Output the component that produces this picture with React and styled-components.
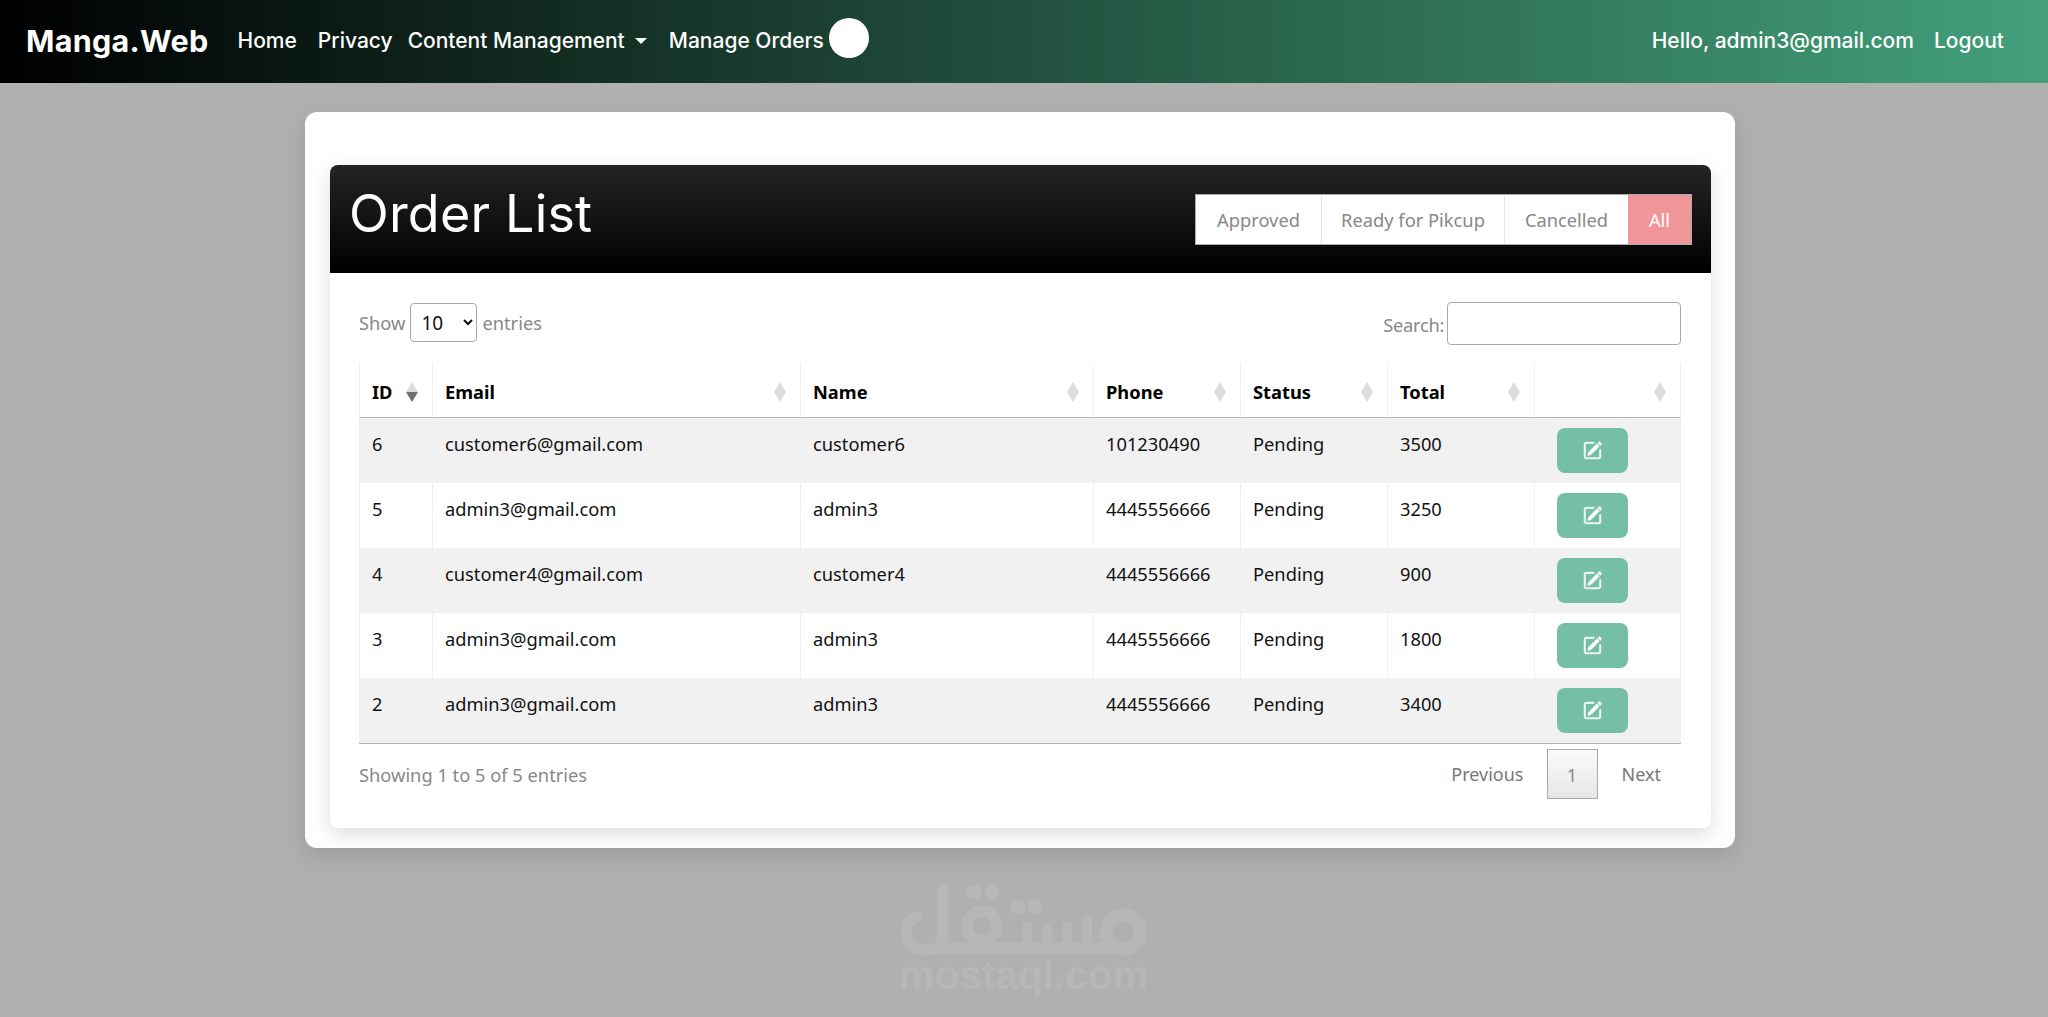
import React from "react";
import styled, {createGlobalStyle} from "styled-components";
import {BsPencilSquare} from "react-icons/bs";

const NAV_FONT = `"Inter", "Liberation Sans", sans-serif`;
const BODY_FONT = `"Noto Sans", "Open Sans", sans-serif`;

const orders = [
	{id: 6, email: "customer6@gmail.com", name: "customer6", phone: "101230490", total: 3500},
	{id: 5, email: "admin3@gmail.com", name: "admin3", phone: "4445556666", total: 3250},
	{id: 4, email: "customer4@gmail.com", name: "customer4", phone: "4445556666", total: 900},
	{id: 3, email: "admin3@gmail.com", name: "admin3", phone: "4445556666", total: 1800},
	{id: 2, email: "admin3@gmail.com", name: "admin3", phone: "4445556666", total: 3400}
];

const columns = [
	{label: "ID", width: 73, active: true},
	{label: "Email", width: 368},
	{label: "Name", width: 293},
	{label: "Phone", width: 147},
	{label: "Status", width: 147},
	{label: "Total", width: 147},
	{label: "", width: 147}
];

const GlobalStyle = createGlobalStyle`
	html, body {
		margin: 0;
		height: 100%;
	}
	body {
		background: #b0b0b0;
		font-family: ${BODY_FONT};
		overflow: hidden;
	}
`;

// Navbar
const Navbar = styled.nav`
	align-items: center;
	background: linear-gradient(90deg, #000 0%, #43a07b 100%);
	box-sizing: border-box;
	display: flex;
	height: 83px;
	padding: 0 26px 3px;
`;

const Brand = styled.span`
	color: #fff;
	font-family: ${NAV_FONT};
	font-size: 30.5px;
	font-weight: 700;
	letter-spacing: 0.3px;
	margin-right: 29px;
`;

const NavLink = styled.span`
	color: #fff;
	font-family: ${NAV_FONT};
	font-size: 21px;
	font-weight: 500;
	margin-right: ${(props) => props.gap ?? 19}px;
	white-space: nowrap;
`;

const Caret = styled.i`
	border-left: 6px solid transparent;
	border-right: 6px solid transparent;
	border-top: 6px solid #fff;
	display: inline-block;
	margin-left: 10px;
	vertical-align: 4px;
`;

const CartBadge = styled.span`
	background: #fff;
	border-radius: 50%;
	height: 40px;
	margin: -5px 0 0 -14px;
	width: 40px;
`;

const NavRight = styled.div`
	align-items: center;
	display: flex;
	margin-left: auto;
	padding-right: 18px;
`;

// Cards
const Sheet = styled.main`
	background: #fff;
	border-radius: 12px;
	box-shadow: 0 8px 24px rgba(0, 0, 0, 0.12);
	box-sizing: border-box;
	height: 736px;
	margin: 29px 0 0 305px;
	padding: 53px 24px 20px 25px;
	width: 1430px;
`;

const Panel = styled.section`
	border-radius: 8px;
	box-shadow: 0 6px 20px rgba(0, 0, 0, 0.14);
	height: 663px;
`;

const PanelHead = styled.header`
	align-items: flex-start;
	background: linear-gradient(180deg, #242424 0%, #000 100%);
	border-radius: 8px 8px 0 0;
	box-sizing: border-box;
	display: flex;
	height: 108px;
	justify-content: space-between;
	padding: 29px 19px 0 19px;
`;

const Title = styled.h1`
	color: #fff;
	font-family: ${NAV_FONT};
	font-size: 52px;
	font-weight: 400;
	letter-spacing: 0.2px;
	line-height: 40px;
	margin: 0;
`;

const FilterGroup = styled.div`
	background: #fff;
	border: 1px solid #aaa;
	display: flex;
	height: 49px;
`;

const FilterItem = styled.span`
	align-items: center;
	background: ${(props) => (props.active ? "#f09599" : "#fff")};
	border-left: ${(props) => (props.first || props.active ? "none" : "1px solid #e6e6e6")};
	box-sizing: border-box;
	color: ${(props) => (props.active ? "#fff" : "#888")};
	display: flex;
	font-size: 18.3px;
	justify-content: center;
	width: ${(props) => props.width}px;
`;

const PanelBody = styled.div`
	padding: 29px 30px 0 29px;
`;

const Controls = styled.div`
	align-items: flex-start;
	color: #888;
	display: flex;
	font-size: 18.3px;
	height: 61px;
	justify-content: space-between;
`;

const Label = styled.label`
	align-items: center;
	display: flex;
	gap: ${(props) => props.gap}px;
	height: ${(props) => props.height}px;
`;

const SearchLabel = styled.span`
	letter-spacing: -0.3px;
	padding-top: 2px;
`;

const Select = styled.select`
	background: #fff;
	border: 1px solid #aaa;
	border-radius: 4px;
	color: #111;
	font-family: ${BODY_FONT};
	font-size: 19px;
	height: 39px;
	padding: 0 4px 0 6px;
	width: 67px;
`;

const SearchInput = styled.input`
	background: #fff;
	border: 1px solid #aaa;
	border-radius: 4px;
	box-sizing: border-box;
	height: 43px;
	width: 234px;
`;

// Table
const Table = styled.table`
	border-collapse: separate;
	border-spacing: 0;
	color: #111;
	font-size: 18.3px;
	table-layout: fixed;
	width: 1322px;
`;

const Th = styled.th`
	border-bottom: 1px solid #b5b5b5;
	border-left: 1px solid #f0f0f0;
	box-sizing: border-box;
	color: #000;
	font-weight: 700;
	height: 55px;
	padding: 2px 12px 0;
	position: relative;
	text-align: left;
	width: ${(props) => props.width}px;
	&:last-child {
		border-right: 1px solid #f0f0f0;
	}
`;

const SortIcon = styled.svg`
	height: 20px;
	position: absolute;
	right: 14px;
	top: 19px;
	width: 12px;
`;

const Row = styled.tr`
	background: ${(props) => (props.striped ? "#f1f1f1" : "#fff")};
`;

const Td = styled.td`
	border-left: 1px solid #f0f0f0;
	box-sizing: border-box;
	height: 65px;
	padding: 13px 12px 0;
	vertical-align: top;
	&:last-child {
		border-right: 1px solid #f0f0f0;
		padding: 10px 0 0 22px;
	}
`;

const EditButton = styled.button`
	align-items: center;
	background: #75bfa7;
	border: none;
	border-radius: 8px;
	color: #fff;
	display: flex;
	font-size: 19px;
	height: 45px;
	justify-content: center;
	width: 71px;
	svg {
		stroke: currentColor;
		stroke-width: 0.5;
	}
`;

const Footer = styled.div`
	align-items: center;
	border-top: 1px solid #b5b5b5;
	color: #888;
	display: flex;
	font-size: 18.3px;
	height: 60px;
	justify-content: space-between;
`;

const Pager = styled.div`
	align-items: center;
	display: flex;
	padding-right: 20px;
`;

const PageLink = styled.span`
	color: #777;
	font-size: 18px;
`;

const PageCurrent = styled.span`
	align-items: center;
	background: linear-gradient(180deg, #fafafa 0%, #e6e6e6 100%);
	border: 1px solid #aaa;
	box-sizing: border-box;
	color: #888;
	display: flex;
	height: 50px;
	justify-content: center;
	margin: 0 24px 0 23px;
	width: 51px;
`;

// Watermark
const Watermark = styled.div`
	align-items: center;
	color: #b7b7b7;
	display: flex;
	flex-direction: column;
	left: 900px;
	position: absolute;
	top: 884px;
	width: 247px;
`;

const WatermarkText = styled.span`
	font-family: "Liberation Sans", sans-serif;
	font-size: 40.5px;
	font-weight: 700;
	line-height: 40px;
	margin-top: -5px;
`;

function SortArrows({active}) {
	return (
		<SortIcon viewBox="0 0 12 20">
			<path d="M6 0 L12 10 H0 Z" fill="#dcdcdc" />
			<path d="M6 20 L12 10 H0 Z" fill={active ? "#707070" : "#dcdcdc"} />
		</SortIcon>
	);
}

function MostaqlLogo() {
	return (
		<svg width="247" height="76" viewBox="0 0 247 76" fill="none" stroke="#b7b7b7" strokeLinecap="round" strokeLinejoin="round" strokeWidth="11">
			<path d="M43 6 V50 Q43 66 28 66 Q6 66 6 46 Q6 36 18 33" />
			<path d="M43 64 H222" />
			<circle cx="82" cy="42" r="15" />
			<path d="M127 62 V42 M147 62 V46 M167 62 V42 M187 62 V35" strokeWidth="10" />
			<circle cx="223" cy="48" r="17" strokeWidth="13" />
			<g fill="#b7b7b7" stroke="none">
				<circle cx="74" cy="8" r="7.5" />
				<circle cx="92" cy="8" r="7.5" />
				<circle cx="118" cy="23" r="7.5" />
				<circle cx="135" cy="23" r="7.5" />
			</g>
		</svg>
	);
}

export default function App() {
	return (
		<>
			<GlobalStyle />
			<Navbar>
				<Brand>Manga.Web</Brand>
				<NavLink gap={21}>Home</NavLink>
				<NavLink gap={15}>Privacy</NavLink>
				<NavLink gap={22}>Content Management<Caret /></NavLink>
				<NavLink>Manage Orders</NavLink>
				<CartBadge />
				<NavRight>
					<NavLink gap={20}>Hello, admin3@gmail.com</NavLink>
					<NavLink gap={0}>Logout</NavLink>
				</NavRight>
			</Navbar>
			<Sheet>
				<Panel>
					<PanelHead>
						<Title>Order List</Title>
						<FilterGroup>
							<FilterItem first width={125}>Approved</FilterItem>
							<FilterItem width={183}>Ready for Pikcup</FilterItem>
							<FilterItem width={124}>Cancelled</FilterItem>
							<FilterItem active width={63}>All</FilterItem>
						</FilterGroup>
					</PanelHead>
					<PanelBody>
						<Controls>
							<Label height={41} gap={5}>
								Show
								<Select defaultValue="10">
									<option>10</option>
									<option>25</option>
									<option>50</option>
								</Select>
								entries
							</Label>
							<Label height={43} gap={3}>
								<SearchLabel>Search:</SearchLabel>
								<SearchInput />
							</Label>
						</Controls>
						<Table>
							<thead>
								<tr>
									{columns.map((col) => (
										<Th key={col.label} width={col.width}>
											{col.label}
											<SortArrows active={col.active} />
										</Th>
									))}
								</tr>
							</thead>
							<tbody>
								{orders.map((order, i) => (
									<Row key={order.id} striped={i % 2 === 0}>
										<Td>{order.id}</Td>
										<Td>{order.email}</Td>
										<Td>{order.name}</Td>
										<Td>{order.phone}</Td>
										<Td>Pending</Td>
										<Td>{order.total}</Td>
										<Td>
											<EditButton><BsPencilSquare /></EditButton>
										</Td>
									</Row>
								))}
							</tbody>
						</Table>
						<Footer>
							<span>Showing 1 to 5 of 5 entries</span>
							<Pager>
								<PageLink>Previous</PageLink>
								<PageCurrent>1</PageCurrent>
								<PageLink>Next</PageLink>
							</Pager>
						</Footer>
					</PanelBody>
				</Panel>
			</Sheet>
			<Watermark>
				<MostaqlLogo />
				<WatermarkText>mostaql.com</WatermarkText>
			</Watermark>
		</>
	);
}
